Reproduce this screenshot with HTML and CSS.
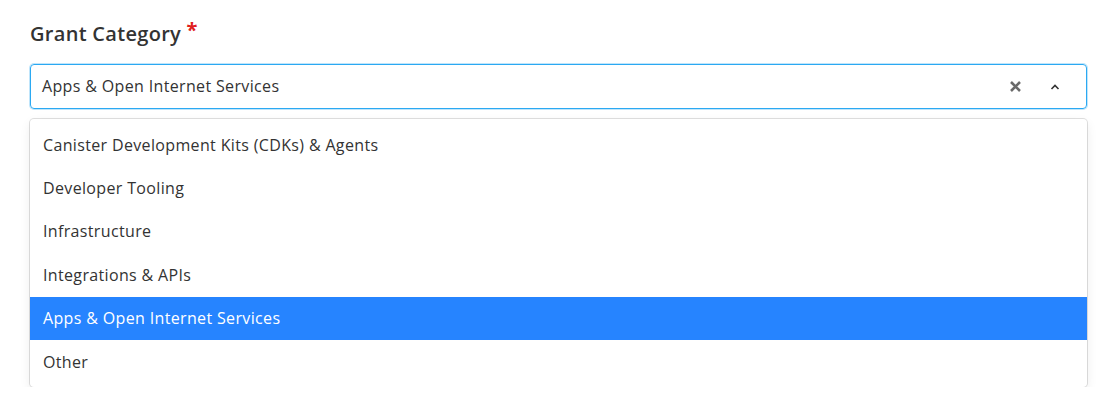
FILE: index.html
```html
<!DOCTYPE html>
<html>
<head>
<meta charset="utf-8">
<link rel="stylesheet" href="styles.css">
</head>
<body>
<div class="field">
  <label class="label">Grant Category <span class="req">*</span></label>
  <div class="control">
    <div class="value">Apps &amp; Open Internet Services</div>
    <div class="indicators">
      <svg class="clear" width="13" height="13" viewBox="0 0 13 13"><path d="M2 2 L11 11 M11 2 L2 11" stroke="#6b6b6b" stroke-width="2.6" stroke-linecap="butt" fill="none"/></svg>
      <svg class="chev" width="10" height="6" viewBox="0 0 10 6"><path d="M1.5 5 L5 1.5 L8.5 5" stroke="#333" stroke-width="1.6" fill="none"/></svg>
    </div>
  </div>
  <div class="menu">
    <div class="option">Canister Development Kits (CDKs) &amp; Agents</div>
    <div class="option">Developer Tooling</div>
    <div class="option">Infrastructure</div>
    <div class="option">Integrations &amp; APIs</div>
    <div class="option selected">Apps &amp; Open Internet Services</div>
    <div class="option">Other</div>
  </div>
</div>
</body>
</html>
```
FILE: styles.css
```css
html, body {
  margin: 0;
  padding: 0;
  background: #fff;
}
body {
  font-family: "Open Sans", "Liberation Sans", sans-serif;
  color: #333;
}
.field {
  padding: 21px 31px 0 30px;
}
.label {
  display: block;
  font-size: 20px;
  font-weight: 600;
  letter-spacing: 0.3px;
  color: #333;
  line-height: 26px;
  margin-bottom: 17px;
}
.req {
  color: #e02020;
  font-size: 20px;
  font-weight: 700;
  vertical-align: top;
  position: relative;
  top: -4px;
}
.control {
  height: 45px;
  box-sizing: border-box;
  border: 1px solid #2ba9f2;
  box-shadow: 0 0 0 1px #bfe5fb;
  border-radius: 4px;
  display: flex;
  align-items: center;
  padding: 0 0 1px 11px;
}
.value {
  flex: 1;
  font-size: 16px;
  letter-spacing: 0.35px;
  color: #333;
}
.indicators {
  display: flex;
  align-items: center;
  gap: 28px;
  padding-right: 26px;
}
.clear { display: block; }
.chev { display: block; margin-top: 1px; }
.menu {
  margin-top: 10px;
  border-radius: 4px;
  box-shadow: 0 0 0 1px rgba(0,0,0,0.12), 0 4px 11px rgba(0,0,0,0.08);
  padding: 4px 0 4px;
}
.option {
  height: 43.4px;
  display: flex;
  align-items: center;
  padding-left: 13px;
  font-size: 16px;
  letter-spacing: 0.35px;
  color: #333;
}
.option.selected {
  background: #2684ff;
  color: #fff;
}
```
